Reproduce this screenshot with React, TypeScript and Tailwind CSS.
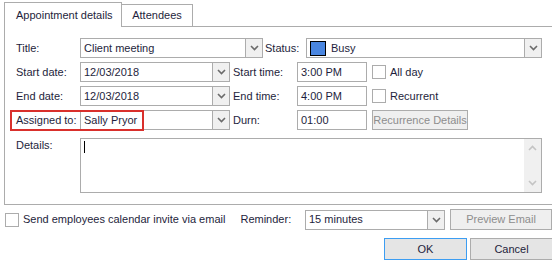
import React from "react";

const Chevron = ({ color = "#6b6b6b" }: { color?: string }) => (
  <svg width="9" height="6" viewBox="0 0 9 6">
    <polyline points="1,1 4.5,4.5 8,1" fill="none" stroke={color} strokeWidth="1.6" />
  </svg>
);

const DropBtn = () => (
  <div className="flex h-full w-[17px] shrink-0 items-center justify-center border-l border-[#acacac] bg-[#f0f0f0]">
    <Chevron />
  </div>
);

const Combo = ({ w, children }: { w: string; children: React.ReactNode }) => (
  <div className={`flex h-[20px] shrink-0 items-center border border-[#acacac] bg-white ${w}`}>
    <div className="flex min-w-0 flex-1 items-center pl-[3px]">{children}</div>
    <DropBtn />
  </div>
);

const Box = ({ w, children }: { w: string; children?: React.ReactNode }) => (
  <div className={`flex h-[20px] shrink-0 items-center border border-[#acacac] bg-white pl-[3px] ${w}`}>{children}</div>
);

const Check = () => <div className="h-[14px] w-[14px] shrink-0 border border-[#acacac] bg-white" />;

export default function App() {
  return (
    <div
      className="relative h-[260px] w-[552px] overflow-hidden whitespace-nowrap bg-white text-[11px] leading-none text-[#1e1e3c]"
      style={{ fontFamily: "'Liberation Sans', Arial, sans-serif" }}
    >
      {/* tabs */}
      <div className="flex h-[26px] items-end pl-[4px]">
        <div className="relative z-10 mb-[-1px] flex h-[25px] w-[118px] items-center border border-b-0 border-[#acacac] bg-white pl-[11px]">
          Appointment details
        </div>
        <div className="flex h-[22px] w-[71px] items-center justify-center border border-l-0 border-b-0 border-[#acacac] bg-white">
          Attendees
        </div>
      </div>

      {/* panel */}
      <div className="ml-[4px] h-[179px] w-[560px] border border-[#acacac] pl-[11px] pt-[11px]">
        <div className="flex flex-col gap-[4px]">
          <div className="flex h-[20px] items-center">
            <span className="w-[64px]">Title:</span>
            <Combo w="w-[183px]">Client meeting</Combo>
            <span className="ml-[2px] w-[41px]">Status:</span>
            <Combo w="w-[236px]">
              <span className="mr-[5px] h-[15px] w-[16px] border border-black bg-[#4a86e0]" />
              Busy
            </Combo>
          </div>
          <div className="flex h-[20px] items-center">
            <span className="w-[64px]">Start date:</span>
            <Combo w="w-[150px]">12/03/2018</Combo>
            <span className="ml-[3px] w-[64px]">Start time:</span>
            <Box w="w-[70px]">3:00 PM</Box>
            <span className="ml-[5px]"><Check /></span>
            <span className="ml-[4px]">All day</span>
          </div>
          <div className="flex h-[20px] items-center">
            <span className="w-[64px]">End date:</span>
            <Combo w="w-[150px]">12/03/2018</Combo>
            <span className="ml-[3px] w-[64px]">End time:</span>
            <Box w="w-[70px]">4:00 PM</Box>
            <span className="ml-[5px]"><Check /></span>
            <span className="ml-[4px]">Recurrent</span>
          </div>
          <div className="relative flex h-[20px] items-center">
            <div className="absolute left-[-6px] top-0 h-[21px] w-[134px] border-2 border-[#d9302c]" />
            <span className="w-[64px]">Assigned to:</span>
            <Combo w="w-[150px]">Sally Pryor</Combo>
            <span className="ml-[3px] w-[64px]">Durn:</span>
            <Box w="w-[70px]">01:00</Box>
            <div className="ml-[5px] flex h-[20px] w-[96px] items-center justify-center border border-[#acacac] bg-[#efefef] text-[#8d8d8d]">
              Recurrence Details
            </div>
          </div>
        </div>
        <div className="mt-[8px] flex">
          <span className="w-[64px] pt-[2px]">Details:</span>
          <div className="flex h-[55px] w-[462px] border border-[#acacac] bg-white">
            <div className="flex-1 pl-[3px] pt-[2px]">
              <div className="h-[12px] w-[1px] bg-black" />
            </div>
            <div className="flex w-[17px] flex-col items-center justify-between bg-[#f0f0f0] py-[6px]">
              <span className="rotate-180"><Chevron color="#c4c4c4" /></span>
              <Chevron color="#c4c4c4" />
            </div>
          </div>
        </div>
      </div>

      {/* footer */}
      <div className="mt-[4px] flex h-[21px] items-center pl-[5px]">
        <Check />
        <span className="ml-[4px] w-[219px]">Send employees calendar invite via email</span>
        <span className="w-[65px]">Reminder:</span>
        <Combo w="w-[140px]">15 minutes</Combo>
        <div className="ml-[5px] flex h-[21px] w-[102px] shrink-0 items-center justify-center border border-[#acacac] bg-[#efefef] text-[#8d8d8d]">
          Preview Email
        </div>
      </div>
      <div className="mt-[8px] flex pl-[384px]">
        <div className="flex h-[22px] w-[83px] shrink-0 items-center justify-center border border-[#3c9df2] bg-[#e5e5e5]">OK</div>
        <div className="ml-[3px] flex h-[22px] w-[83px] shrink-0 items-center justify-center border border-[#acacac] bg-[#e5e5e5]">Cancel</div>
      </div>
    </div>
  );
}
